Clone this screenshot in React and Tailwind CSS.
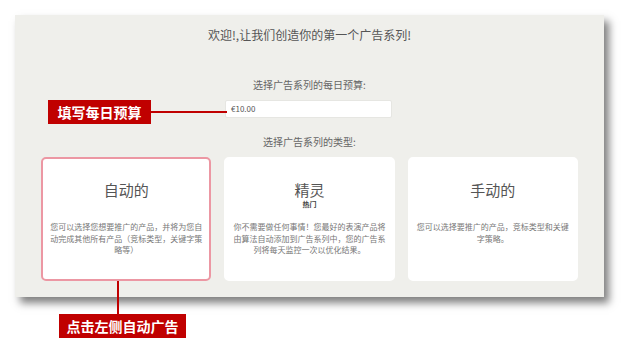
import React from 'react';

const cards = [
  {
    title: '自动的',
    desc: '您可以选择您想要推广的产品，并将为您自动完成其他所有产品（竞标类型，关键字策略等）',
    active: true,
  },
  {
    title: '精灵',
    badge: '热门',
    desc: '你不需要做任何事情！您最好的表演产品将由算法自动添加到广告系列中，您的广告系列将每天监控一次以优化结果。',
  },
  {
    title: '手动的',
    desc: '您可以选择要推广的产品，竞标类型和关键字策略。',
  },
];

const CampaignCard = ({ title, badge, desc, active }) => (
  <div
    className={`h-[124px] rounded-[5px] bg-white border-2 pt-[22px] px-[6px] text-center ${
      active ? 'border-[#ec97a3]' : 'border-white'
    }`}
  >
    <div className="h-[40px]">
      <div className="text-[15px] leading-[18px] text-[#555]">{title}</div>
      {badge && <div className="text-[7px] leading-[10px] font-bold text-[#444]">{badge}</div>}
    </div>
    <p className="text-[8px] leading-[11.5px] text-[#777]">{desc}</p>
  </div>
);

export default function App() {
  return (
    <div
      className="relative w-[635px] h-[342px] bg-white overflow-hidden pt-[15px] pl-[15px]"
      style={{ fontFamily: '"Noto Sans CJK SC", "Noto Sans", sans-serif' }}
    >
      {/* main panel */}
      <div className="w-[589px] h-[282px] bg-[#efefeb] shadow-[5px_6px_8px_rgba(0,0,0,0.5)] pt-[12px] px-[26px]">
        <h1 className="text-center text-[12px] leading-[16px] text-[#555]">
          欢迎!,让我们创造你的第一个广告系列!
        </h1>

        <div className="mt-[35px] text-center text-[10px] leading-[14px] text-[#666]">
          选择广告系列的每日预算:
        </div>
        <div className="mt-[8px] flex justify-center">
          <div className="ml-[-2px] w-[167px] h-[18px] bg-white rounded-[2px] border border-[#e6e6e2] pl-[5px] flex items-center text-[8px] text-[#555]">
            €10.00
          </div>
        </div>

        <div className="mt-[17px] text-center text-[10px] leading-[14px] text-[#666]">
          选择广告系列的类型:
        </div>

        <div className="mt-[8px] grid grid-cols-3 gap-[13px]">
          {cards.map((c) => (
            <CampaignCard key={c.title} {...c} />
          ))}
        </div>
      </div>

      {/* annotation: budget */}
      <div className="absolute left-[48px] top-[100px] flex items-center">
        <div className="w-[103px] h-[24px] bg-[#c00000] text-white font-bold text-[14px] flex items-center justify-center">
          填写每日预算
        </div>
        <div className="w-[76px] h-[2px] bg-[#c00000]" />
      </div>

      {/* annotation: click auto */}
      <div className="absolute left-[59px] top-[281px] flex flex-col items-start">
        <div className="ml-[58px] w-[2px] h-[33px] bg-[#c00000]" />
        <div className="w-[127px] h-[24px] bg-[#c00000] text-white font-bold text-[14px] flex items-center justify-center">
          点击左侧自动广告
        </div>
      </div>
    </div>
  );
}
